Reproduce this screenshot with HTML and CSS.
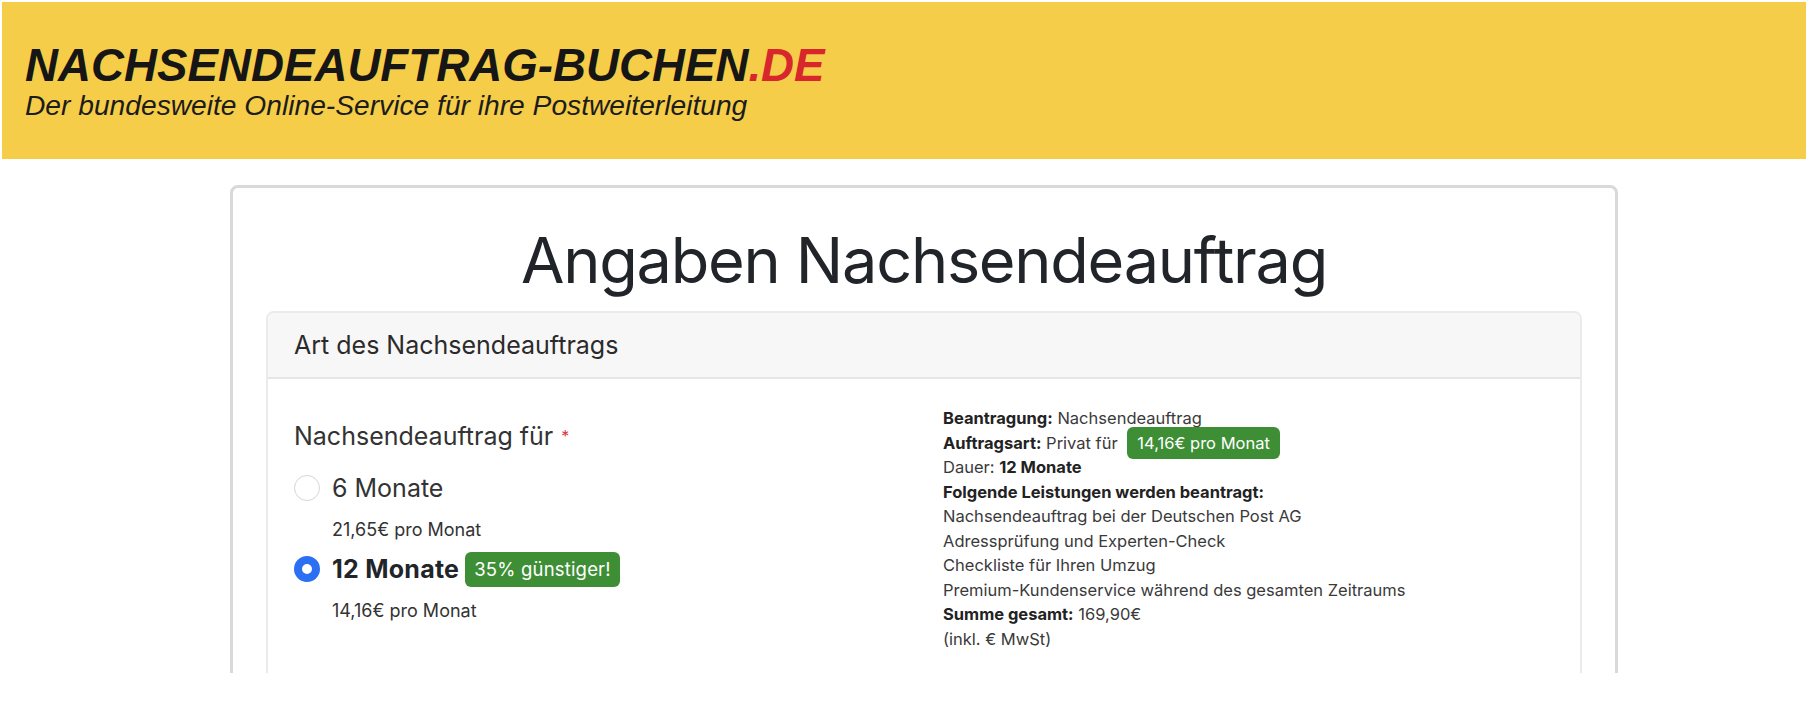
FILE: index.html
```html
<!DOCTYPE html>
<html lang="de">
<head>
<meta charset="utf-8">
<title>Angaben Nachsendeauftrag</title>
<link rel="stylesheet" href="styles.css">
</head>
<body>
<header class="site-header">
  <div class="brand">NACHSENDEAUFTRAG-BUCHEN<span class="tld">.DE</span></div>
  <div class="tagline">Der bundesweite Online-Service für ihre Postweiterleitung</div>
</header>
<main class="viewport">
  <section class="panel">
    <h1 class="panel-title">Angaben Nachsendeauftrag</h1>
    <div class="card">
      <div class="card-header">Art des Nachsendeauftrags</div>
      <div class="card-body">
        <div class="options">
          <div class="field-label">Nachsendeauftrag für <span class="required">*</span></div>
          <div class="option">
            <span class="radio"></span>
            <span class="option-name">6 Monate</span>
          </div>
          <div class="option-price">21,65€ pro Monat</div>
          <div class="option option-second">
            <span class="radio radio-checked"></span>
            <span class="option-name option-name-active">12 Monate</span>
            <span class="badge badge-large">35% günstiger!</span>
          </div>
          <div class="option-price">14,16€ pro Monat</div>
        </div>
        <div class="summary">
          <div><b>Beantragung:</b> Nachsendeauftrag</div>
          <div><b>Auftragsart:</b> Privat für <span class="badge badge-inline">14,16€ pro Monat</span></div>
          <div>Dauer: <b>12 Monate</b></div>
          <div><b>Folgende Leistungen werden beantragt:</b></div>
          <div>Nachsendeauftrag bei der Deutschen Post AG</div>
          <div>Adressprüfung und Experten-Check</div>
          <div>Checkliste für Ihren Umzug</div>
          <div>Premium-Kundenservice während des gesamten Zeitraums</div>
          <div><b>Summe gesamt:</b> 169,90€</div>
          <div>(inkl. € MwSt)</div>
        </div>
      </div>
    </div>
  </section>
</main>
</body>
</html>
```
FILE: styles.css
```css
* { box-sizing: border-box; }
html, body { margin: 0; padding: 0; background: #fff; }
body {
  font-family: Inter, "Noto Sans", sans-serif;
  color: #212529;
}

.site-header {
  margin: 2px 2px 0;
  height: 157px;
  padding: 40px 23px;
  background: #f6cd48;
}
.brand {
  font-family: "Liberation Sans", Arial, sans-serif;
  font-weight: 700;
  font-style: italic;
  font-size: 45.7px;
  line-height: 47px;
  color: #161616;
}
.brand .tld { color: #d8262d; }
.tagline {
  margin-top: 2px;
  font-family: "Liberation Sans", Arial, sans-serif;
  font-style: italic;
  font-size: 28.2px;
  line-height: 28px;
  color: #1c1c1c;
}

.viewport {
  height: 514px;
  overflow: hidden;
  padding-top: 26px;
}
.panel {
  margin-left: 230px;
  width: 1388px;
  min-height: 700px;
  padding: 0 33px;
  border: 3px solid #d9d9d9;
  border-radius: 8px;
}
.panel-title {
  margin: 34px 0 13px;
  text-align: center;
  font-size: 63px;
  font-weight: 400;
  line-height: 76px;
  letter-spacing: -0.02em;
  color: #212529;
}

.card {
  border: 2px solid #ebebee;
  border-radius: 8px;
  min-height: 500px;
}
.card-header {
  padding: 14px 26px;
  background: #f7f7f7;
  border-bottom: 2px solid #e6e6e9;
  border-radius: 6px 6px 0 0;
  font-size: 25px;
  line-height: 36px;
  color: #2b2b2b;
}
.card-body {
  display: grid;
  grid-template-columns: 649px 1fr;
  padding: 0 26px;
}

.options { padding-top: 39px; color: #333; }
.field-label { font-size: 25px; line-height: 36px; }
.required {
  color: #dc3545;
  font-size: 16px;
  vertical-align: top;
  margin-left: 1px;
}
.option {
  display: flex;
  align-items: center;
  gap: 12px;
  height: 36px;
  margin-top: 16px;
}
.option-second { margin-top: 9px; }
.radio {
  width: 26px;
  height: 26px;
  border-radius: 50%;
  border: 1px solid #d3d6db;
  background: #fff;
  flex: none;
}
.radio-checked {
  border: 8px solid #2b6ff3;
}
.option-name { font-size: 25px; line-height: 36px; }
.option-name-active { font-weight: 700; color: #212529; letter-spacing: 0.01em; }
.option-price {
  margin: 12px 0 0 38px;
  font-size: 18px;
  line-height: 24px;
  color: #333;
}

.badge {
  background: #3e8e36;
  color: #fff;
  border-radius: 6px;
}
.badge-large {
  margin-left: -6px;
  font-size: 18.5px;
  line-height: 23px;
  padding: 6px 9px;
  letter-spacing: 0.01em;
}
.badge-inline {
  padding: 6px 10px;
  margin-left: 5px;
}

.summary {
  padding-top: 27px;
  font-size: 16.5px;
  line-height: 24.5px;
  color: #3a3a3a;
}
.summary b { font-weight: 700; color: #222; }
```
